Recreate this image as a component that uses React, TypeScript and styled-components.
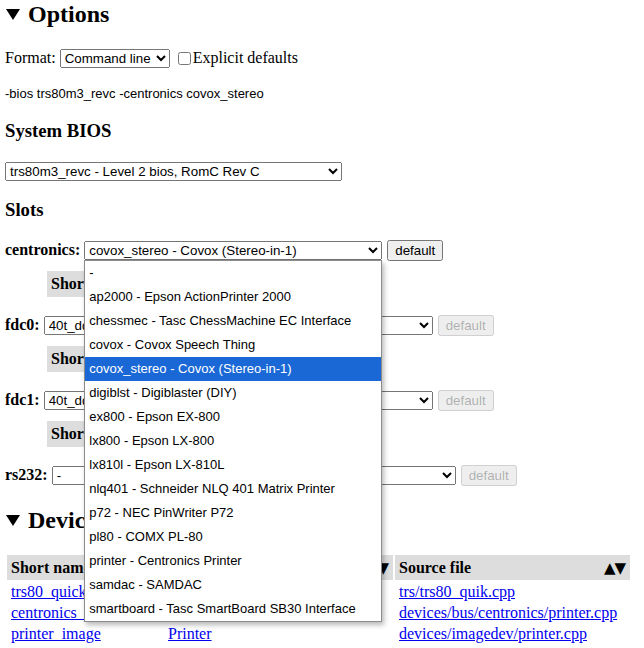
import React from "react";
import styled, { createGlobalStyle } from "styled-components";

const GlobalStyle = createGlobalStyle`
  html, body { margin: 0; padding: 0; background: #fff; }
  body {
    font-family: "Liberation Serif", "Times New Roman", serif;
    font-size: 16px;
    color: #000;
  }
`;

const Page = styled.div`
  padding: 0 5px;
  display: flex;
  flex-direction: column;
  align-items: flex-start;
`;

const SectionHeading = styled.h2<{ $mt: number }>`
  margin: ${(p) => p.$mt}px 0 0;
  font-size: 24px;
  line-height: 28px;
  font-weight: bold;
  display: flex;
  align-items: center;
  gap: 8px;
`;

const SubHeading = styled.h3<{ $mt: number }>`
  margin: ${(p) => p.$mt}px 0 0;
  font-size: 18.72px;
  line-height: 22px;
  font-weight: bold;
`;

const Row = styled.div<{ $mt: number }>`
  margin-top: ${(p) => p.$mt}px;
  display: flex;
  align-items: center;
  height: 20px;
`;

const Label = styled.label`
  font-weight: bold;
  margin-right: 4px;
`;

const PlainLabel = styled.label`
  margin-right: 4px;
`;

const Select = styled.select<{ $w: number }>`
  width: ${(p) => p.$w}px;
  height: 19px;
  font: 13.33px "Liberation Sans", Arial, sans-serif;
  margin: 0;
`;

const Button = styled.button`
  font: 13.33px "Liberation Sans", Arial, sans-serif;
  height: 21px;
  margin: 0 0 0 5px;
`;

const Checkbox = styled.input`
  margin: 0 2px 0 8px;
`;

const CommandLine = styled.div<{ $mt: number }>`
  margin-top: ${(p) => p.$mt}px;
  font: 13px/16px "Liberation Sans", Arial, sans-serif;
`;

const Anchor = styled.div`
  position: relative;
  display: flex;
`;

const Popup = styled.ul`
  position: absolute;
  top: 100%;
  left: 0;
  right: 0;
  margin: 0;
  padding: 0;
  list-style: none;
  background: #fff;
  border: 1px solid #8c8c8c;
  box-shadow: 2px 3px 5px rgba(0, 0, 0, 0.28);
  z-index: 10;
  font: 13px "Liberation Sans", Arial, sans-serif;
`;

const PopupItem = styled.li<{ $active?: boolean }>`
  height: 24px;
  line-height: 24px;
  padding-left: 4px;
  white-space: nowrap;
  background: ${(p) => (p.$active ? "#1a68d6" : "transparent")};
  color: ${(p) => (p.$active ? "#fff" : "#000")};
`;

const SlotTable = styled.table`
  margin: 9px 0 0 40px;
  border-spacing: 2px;
`;

const Th = styled.th<{ $w: number; $h: number }>`
  width: ${(p) => p.$w}px;
  background: #ddd;
  text-align: left;
  height: ${(p) => p.$h}px;
  padding: 0 4px;
  font-size: 16px;
  white-space: nowrap;
`;

const HeadInner = styled.span`
  display: flex;
  justify-content: space-between;
  align-items: center;
`;

const Sort = styled.span`
  font: 15px "DejaVu Sans", sans-serif;
  letter-spacing: -1px;
  margin-right: 1px;
`;

const DeviceTable = styled.table`
  margin-top: 19px;
  border-spacing: 2px;
  width: 627px;
  table-layout: fixed;
`;

const Td = styled.td`
  padding: 0 4px;
  height: 19px;
  white-space: nowrap;
  overflow: hidden;
`;

const Link = styled.a`
  color: #0000ee;
  text-decoration: underline;
`;

const Triangle = () => (
  <svg width="14" height="11" viewBox="0 0 14 11" style={{ marginLeft: 1 }}>
    <path d="M0 0H14L7 11Z" fill="#000" />
  </svg>
);

const centronicsOptions = [
  "-",
  "ap2000 - Epson ActionPrinter 2000",
  "chessmec - Tasc ChessMachine EC Interface",
  "covox - Covox Speech Thing",
  "covox_stereo - Covox (Stereo-in-1)",
  "digiblst - Digiblaster (DIY)",
  "ex800 - Epson EX-800",
  "lx800 - Epson LX-800",
  "lx810l - Epson LX-810L",
  "nlq401 - Schneider NLQ 401 Matrix Printer",
  "p72 - NEC PinWriter P72",
  "pl80 - COMX PL-80",
  "printer - Centronics Printer",
  "samdac - SAMDAC",
  "smartboard - Tasc SmartBoard SB30 Interface",
];

const SlotInfo = () => (
  <SlotTable>
    <thead>
      <tr>
        <Th $w={110} $h={26}>Short name</Th>
        <Th $w={150} $h={26}>Description</Th>
      </tr>
    </thead>
  </SlotTable>
);

const SortHead = ({ children }: { children: React.ReactNode }) => (
  <HeadInner>
    <span>{children}</span>
    <Sort>▲▼</Sort>
  </HeadInner>
);

export default function App() {
  return (
    <>
      <GlobalStyle />
      <Page>
        <SectionHeading $mt={0}>
          <Triangle />
          Options
        </SectionHeading>
        <Row $mt={20}>
          <PlainLabel>Format:</PlainLabel>
          <Select $w={110} defaultValue="cmd">
            <option value="cmd">Command line</option>
            <option value="ini">INI file</option>
          </Select>
          <Checkbox type="checkbox" />
          <span>Explicit defaults</span>
        </Row>
        <CommandLine $mt={18}>-bios trs80m3_revc -centronics covox_stereo</CommandLine>
        <SubHeading $mt={18}>System BIOS</SubHeading>
        <Row $mt={19}>
          <Select $w={337} defaultValue="revc">
            <option value="revc">trs80m3_revc - Level 2 bios, RomC Rev C</option>
          </Select>
        </Row>
        <SubHeading $mt={18}>Slots</SubHeading>

        <Row $mt={19}>
          <Label>centronics:</Label>
          <Anchor>
            <Select $w={298} defaultValue="covox_stereo">
              <option value="covox_stereo">covox_stereo - Covox (Stereo-in-1)</option>
            </Select>
            <Popup>
              {centronicsOptions.map((o) => (
                <PopupItem key={o} $active={o.startsWith("covox_stereo")}>
                  {o}
                </PopupItem>
              ))}
            </Popup>
          </Anchor>
          <Button>default</Button>
        </Row>
        <SlotInfo />

        <Row $mt={16}>
          <Label>fdc0:</Label>
          <Select $w={389} defaultValue="40t">
            <option value="40t">40t_dd - 5.25" double density floppy drive (40 tracks)</option>
          </Select>
          <Button disabled>default</Button>
        </Row>
        <SlotInfo />

        <Row $mt={16}>
          <Label>fdc1:</Label>
          <Select $w={389} defaultValue="40t">
            <option value="40t">40t_dd - 5.25" double density floppy drive (40 tracks)</option>
          </Select>
          <Button disabled>default</Button>
        </Row>
        <SlotInfo />

        <Row $mt={16}>
          <Label>rs232:</Label>
          <Select $w={404} defaultValue="-">
            <option value="-">-</option>
          </Select>
          <Button disabled>default</Button>
        </Row>

        <SectionHeading $mt={21}>
          <Triangle />
          Devices
        </SectionHeading>
        <DeviceTable>
          <colgroup>
            <col style={{ width: 155 }} />
            <col style={{ width: 229 }} />
            <col style={{ width: 235 }} />
          </colgroup>
          <thead>
            <tr>
              <Th $w={155} $h={25}>
                <SortHead>Short name</SortHead>
              </Th>
              <Th $w={229} $h={25}>
                <SortHead>Description</SortHead>
              </Th>
              <Th $w={235} $h={25}>
                <SortHead>Source file</SortHead>
              </Th>
            </tr>
          </thead>
          <tbody>
            <tr>
              <Td><Link href="#">trs80_quickload</Link></Td>
              <Td><Link href="#">TRS-80 Quickload</Link></Td>
              <Td><Link href="#">trs/trs80_quik.cpp</Link></Td>
            </tr>
            <tr>
              <Td><Link href="#">centronics_printer</Link></Td>
              <Td><Link href="#">Centronics Printer</Link></Td>
              <Td><Link href="#">devices/bus/centronics/printer.cpp</Link></Td>
            </tr>
            <tr>
              <Td><Link href="#">printer_image</Link></Td>
              <Td><Link href="#">Printer</Link></Td>
              <Td><Link href="#">devices/imagedev/printer.cpp</Link></Td>
            </tr>
          </tbody>
        </DeviceTable>
      </Page>
    </>
  );
}
